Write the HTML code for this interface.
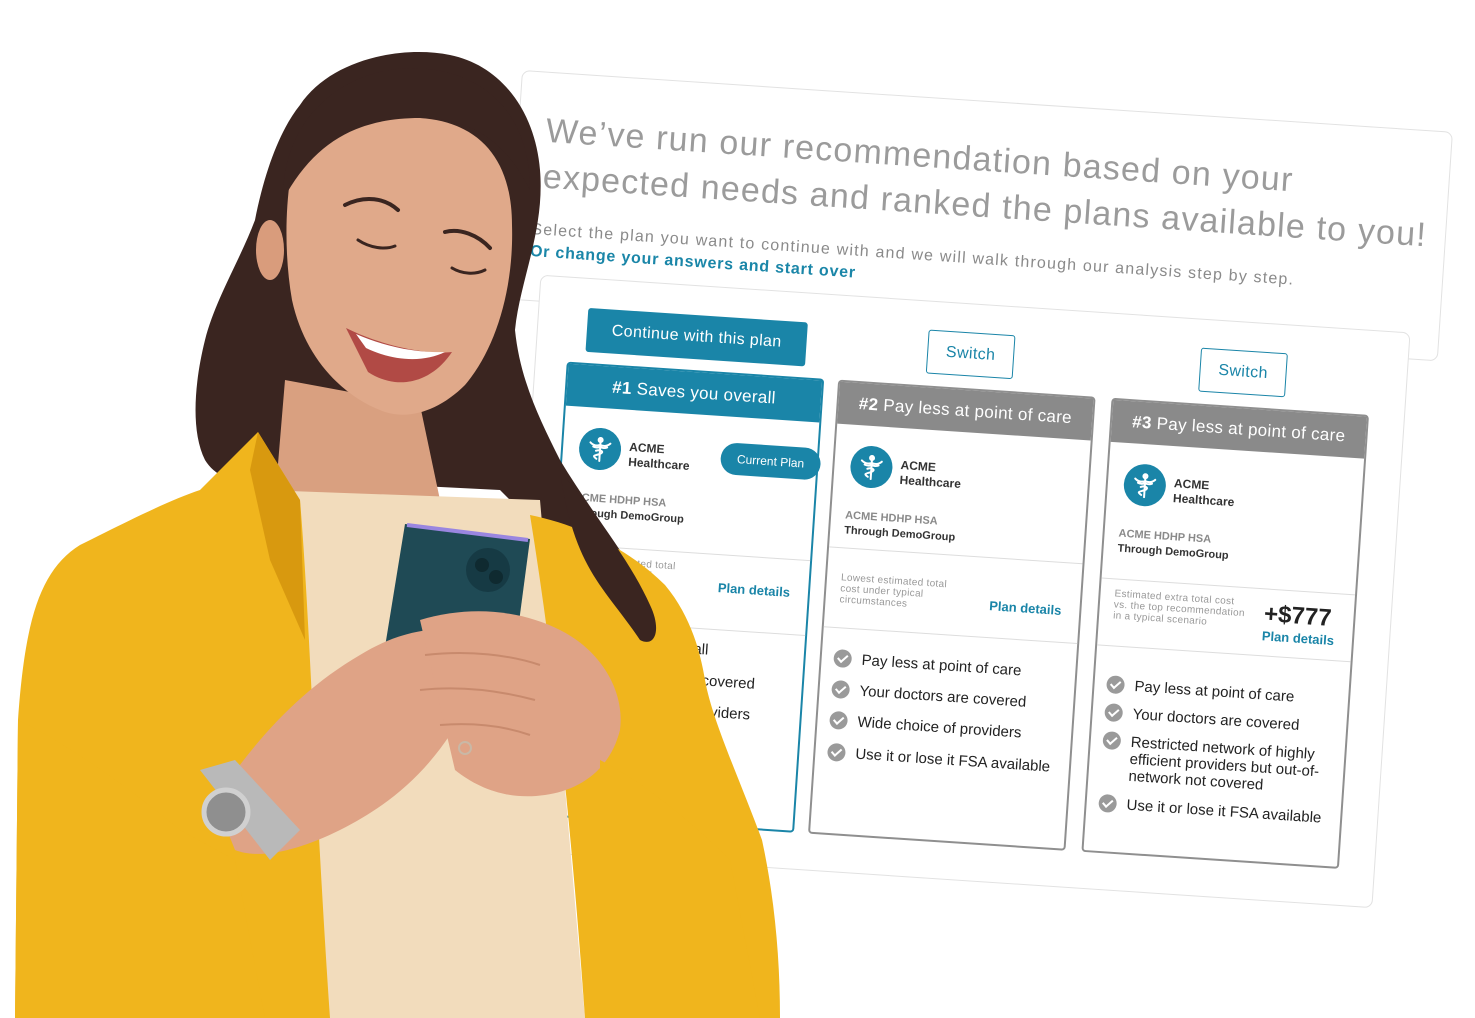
<!DOCTYPE html>
<html><head><meta charset="utf-8">
<style>
*{box-sizing:border-box;margin:0;padding:0}
body{width:1475px;height:1018px;overflow:hidden;background:#fff;font-family:"Liberation Sans",sans-serif;position:relative}
.ui{position:absolute;left:522px;top:70px;width:940px;height:800px;transform-origin:0 0;transform:rotate(3.8deg)}
.panel{position:absolute;background:#fff;border:1.5px solid #e2e2e2;border-radius:8px}
.h1{position:absolute;left:28px;top:36px;color:#9b9b9b;font-size:34px;line-height:46px;letter-spacing:1.2px;white-space:nowrap}
.sub{position:absolute;left:20px;top:150px;color:#8a8a8a;font-size:16px;letter-spacing:1.2px;white-space:nowrap}
.lnk{position:absolute;left:20px;top:172px;color:#1a86a8;font-size:16px;font-weight:bold;letter-spacing:.8px;white-space:nowrap}
.btn{position:absolute;height:44px;display:flex;align-items:center;justify-content:center;font-size:16px;border-radius:3px;letter-spacing:.4px}
.cbtn{background:#1a85a8;color:#fff;width:220px}
.sbtn{border:1.5px solid #1a85a8;color:#1a85a8;width:87px;background:#fff}
.card{position:absolute;top:288px;width:258px;height:455px;border:2px solid #8f8f8f;border-radius:4px;background:#fff}
.card.c1{border-color:#1a85a8}
.hd{height:42px;background:#8a8a8a;color:#fff;font-size:17px;display:flex;align-items:center;justify-content:center;letter-spacing:.3px}
.c1 .hd{background:#1a85a8}
.logo{position:absolute;left:16px;top:62px;width:42px;height:42px;border-radius:50%;background:#1a85a8}
.acme{position:absolute;left:66px;top:72px;font-size:12px;font-weight:bold;color:#333;line-height:15px}
.plan{position:absolute;left:14px;top:126px;font-size:11px;font-weight:bold;color:#8a8a8a;line-height:15px}
.plan b{color:#333}
.dv{position:absolute;left:0;right:0;height:1px;background:#ddd}
.sm{position:absolute;left:14px;top:190px;width:118px;font-size:10px;color:#999;line-height:11px;letter-spacing:.3px}
.pd{position:absolute;right:18px;top:206px;font-size:13px;font-weight:bold;color:#1a85a8}
.ft{position:absolute;left:12px;font-size:15px;color:#222;line-height:17px;width:235px}
.ft i{position:absolute;left:0;top:-1px;width:18px;height:18px;border-radius:50%;background:#9a9a9a}
.ft i:after{content:"";position:absolute;left:6px;top:3px;width:4px;height:8px;border:solid #fff;border-width:0 2px 2px 0;transform:rotate(45deg)}
.ft span{display:block;margin-left:28px}
.pill{position:absolute;left:158px;top:68px;width:100px;height:32px;border-radius:16px;background:#1a85a8;color:#fff;font-size:12px;display:flex;align-items:center;justify-content:center}
</style></head><body>
<div class="ui">
  <div class="panel" style="left:0;top:0;width:933px;height:230px"></div>
  <div class="h1">We’ve run our recommendation based on your<br>expected needs and ranked the plans available to you!</div>
  <div class="sub">Select the plan you want to continue with and we will walk through our analysis step by step.</div>
  <div class="lnk">Or change your answers and start over</div>
  <div class="panel" style="left:32px;top:203px;width:872px;height:577px"></div>
  <div class="btn cbtn" style="left:82px;top:233px">Continue with this plan</div>
  <div class="btn sbtn" style="left:423px;top:232px">Switch</div>
  <div class="btn sbtn" style="left:696px;top:232px">Switch</div>

  <div class="card c1" style="left:64px">
    <div class="hd"><b>#1</b>&nbsp;Saves you overall</div>
    <div class="logo"><svg width="42" height="42" viewBox="0 0 42 42" fill="none" stroke="#fff" stroke-width="2" stroke-linecap="round"><path d="M21 11v22M11 15c3 3 7 3 10 2c3 1 7 1 10-2M14 19c2 1 5 1 7 0c2 1 5 1 7 0M17 23c5-2 9 1 4 3s-8 2-3 5"/><circle cx="21" cy="12" r="2"/></svg></div>
    <div class="acme">ACME<br>Healthcare</div>
    <div class="pill">Current Plan</div>
    <div class="plan">ACME HDHP HSA<br><b>Through DemoGroup</b></div>
    <div class="dv" style="top:180px"></div>
    <div class="sm">Lowest estimated total cost under typical circumstances</div>
    <div class="pd">Plan details</div>
    <div class="dv" style="top:255px"></div>
    <div class="ft" style="top:268px"><i></i><span>Saves you overall</span></div>
    <div class="ft" style="top:299px"><i></i><span>Your doctors are covered</span></div>
    <div class="ft" style="top:330px"><i></i><span>Wide choice of providers</span></div>
  </div>

  <div class="card" style="left:336px">
    <div class="hd"><b>#2</b>&nbsp;Pay less at point of care</div>
    <div class="logo"><svg width="42" height="42" viewBox="0 0 42 42" fill="none" stroke="#fff" stroke-width="2" stroke-linecap="round"><path d="M21 11v22M11 15c3 3 7 3 10 2c3 1 7 1 10-2M14 19c2 1 5 1 7 0c2 1 5 1 7 0M17 23c5-2 9 1 4 3s-8 2-3 5"/><circle cx="21" cy="12" r="2"/></svg></div>
    <div class="acme">ACME<br>Healthcare</div>
    <div class="plan">ACME HDHP HSA<br><b>Through DemoGroup</b></div>
    <div class="dv" style="top:165px"></div>
    <div class="sm">Lowest estimated total cost under typical circumstances</div>
    <div class="pd">Plan details</div>
    <div class="dv" style="top:245px"></div>
    <div class="ft" style="top:268px"><i></i><span>Pay less at point of care</span></div>
    <div class="ft" style="top:299px"><i></i><span>Your doctors are covered</span></div>
    <div class="ft" style="top:330px"><i></i><span>Wide choice of providers</span></div>
    <div class="ft" style="top:362px"><i></i><span>Use it or lose it FSA available</span></div>
  </div>

  <div class="card" style="left:610px">
    <div class="hd"><b>#3</b>&nbsp;Pay less at point of care</div>
    <div class="logo"><svg width="42" height="42" viewBox="0 0 42 42" fill="none" stroke="#fff" stroke-width="2" stroke-linecap="round"><path d="M21 11v22M11 15c3 3 7 3 10 2c3 1 7 1 10-2M14 19c2 1 5 1 7 0c2 1 5 1 7 0M17 23c5-2 9 1 4 3s-8 2-3 5"/><circle cx="21" cy="12" r="2"/></svg></div>
    <div class="acme">ACME<br>Healthcare</div>
    <div class="plan">ACME HDHP HSA<br><b>Through DemoGroup</b></div>
    <div class="dv" style="top:178px"></div>
    <div class="sm" style="top:188px;width:135px">Estimated extra total cost vs. the top recommendation in a typical scenario</div>
    <div style="position:absolute;right:22px;top:190px;font-size:24px;font-weight:bold;color:#222">+$777</div>
    <div class="pd" style="top:218px">Plan details</div>
    <div class="dv" style="top:245px"></div>
    <div class="ft" style="top:276px"><i></i><span>Pay less at point of care</span></div>
    <div class="ft" style="top:304px"><i></i><span>Your doctors are covered</span></div>
    <div class="ft" style="top:332px"><i></i><span>Restricted network of highly efficient providers but out-of-network not covered</span></div>
    <div class="ft" style="top:395px"><i></i><span>Use it or lose it FSA available</span></div>
  </div>
</div>

<svg style="position:absolute;left:0;top:0" width="1475" height="1018" viewBox="0 0 1475 1018">
  <!-- hair back -->
  <path fill="#3a2520" d="M300 105C330 60 400 45 450 55C500 65 535 110 540 170C545 230 520 280 515 330C520 380 540 420 560 460C590 510 630 560 650 600C665 625 660 645 645 640C620 610 590 590 565 560C540 530 520 510 500 490L300 480C260 490 220 485 205 460C190 430 195 380 205 340C215 300 240 260 255 220C265 170 280 130 300 105Z"/>
  <!-- neck -->
  <path fill="#d9a080" d="M285 380L420 405L440 500L275 500Z"/>
  <!-- shirt -->
  <path fill="#f2dcbc" d="M262 490L540 500L585 1018L300 1018Z"/>
  <!-- face -->
  <path fill="#e0a98a" d="M290 180C300 130 360 115 420 118C480 122 512 160 512 225C514 290 495 350 465 385C440 410 410 420 385 412C345 398 305 360 292 300C285 260 285 215 290 180Z"/>
  <ellipse cx="270" cy="250" rx="14" ry="30" fill="#d99c7c"/>
  <!-- hairline cap -->
  <path fill="#3a2520" d="M283 200C282 120 340 70 410 68C480 68 530 110 530 190C505 140 470 118 420 118C360 118 315 140 283 200Z"/>
  <!-- brows/eyes -->
  <path fill="none" stroke="#3a2520" stroke-width="4" stroke-linecap="round" d="M345 205C365 195 385 198 398 210M445 232C460 228 478 235 490 248"/>
  <path fill="none" stroke="#3a2520" stroke-width="3" stroke-linecap="round" d="M358 240C370 248 385 250 395 246M452 268C462 274 475 275 485 270"/>
  <!-- mouth -->
  <path fill="#b14a45" d="M346 328C380 345 425 355 452 352C430 385 395 390 368 372Z"/>
  <path fill="#fff" d="M356 334C388 348 420 353 445 352C425 362 395 362 366 348Z"/>
  <!-- left jacket -->
  <path fill="#f0b51d" d="M15 1018L18 720C25 620 40 570 80 545C130 520 170 500 200 490L258 432L300 500C310 620 315 800 330 1018Z"/>
  <path fill="#d8990f" d="M258 432L300 500L305 640L270 560L250 470Z"/>
  <!-- right jacket -->
  <path fill="#f0b51d" d="M530 515C580 525 630 550 665 585C690 615 700 650 705 680C712 720 740 780 762 840C775 900 780 960 780 1018L585 1018C575 880 560 700 530 515Z"/>
  <!-- curl over jacket -->
  <path fill="#3a2520" d="M560 470C590 510 630 560 650 605C662 630 655 648 640 640C620 610 600 590 585 560C575 540 565 510 560 470Z"/>
  <!-- phone -->
  <polygon fill="#1f4a55" points="405,524 530,539 508,705 378,690"/>
  <path stroke="#9a86e0" stroke-width="4" d="M407 525L528 540"/>
  <circle cx="488" cy="570" r="22" fill="#163a44"/>
  <circle cx="482" cy="565" r="7" fill="#0f2a30"/><circle cx="496" cy="577" r="7" fill="#0f2a30"/>
  <!-- hands -->
  <path fill="#dfa386" d="M215 800C255 740 300 690 360 655C400 630 440 625 470 632L470 700C440 760 400 800 340 830C300 850 260 860 235 850Z"/>
  <path fill="#dfa386" d="M420 620C470 605 520 610 560 630C600 650 625 690 620 730C610 770 580 790 545 795C510 800 480 790 455 770Z"/>
  <path fill="none" stroke="#c88a6d" stroke-width="2" d="M425 655C470 650 510 655 540 665M420 690C465 685 505 692 535 700M440 725C480 722 510 728 530 735"/>
  <circle cx="465" cy="748" r="6" fill="none" stroke="#c9b8a6" stroke-width="2"/>
  <!-- left sleeve -->
  <path fill="#f0b51d" d="M18 720C60 740 120 780 180 830L235 860L265 1018L15 1018Z"/>
  <!-- right lower sleeve -->
  <path fill="#f0b51d" d="M600 760C640 780 690 820 730 860L760 1018L600 1018Z"/>
  <!-- watch -->
  <path fill="#b9b9b9" d="M200 770L235 760L300 830L270 860Z"/>
  <circle cx="226" cy="812" r="22" fill="#8f8f8f" stroke="#d0d0d0" stroke-width="5"/>
</svg>
</body></html>
